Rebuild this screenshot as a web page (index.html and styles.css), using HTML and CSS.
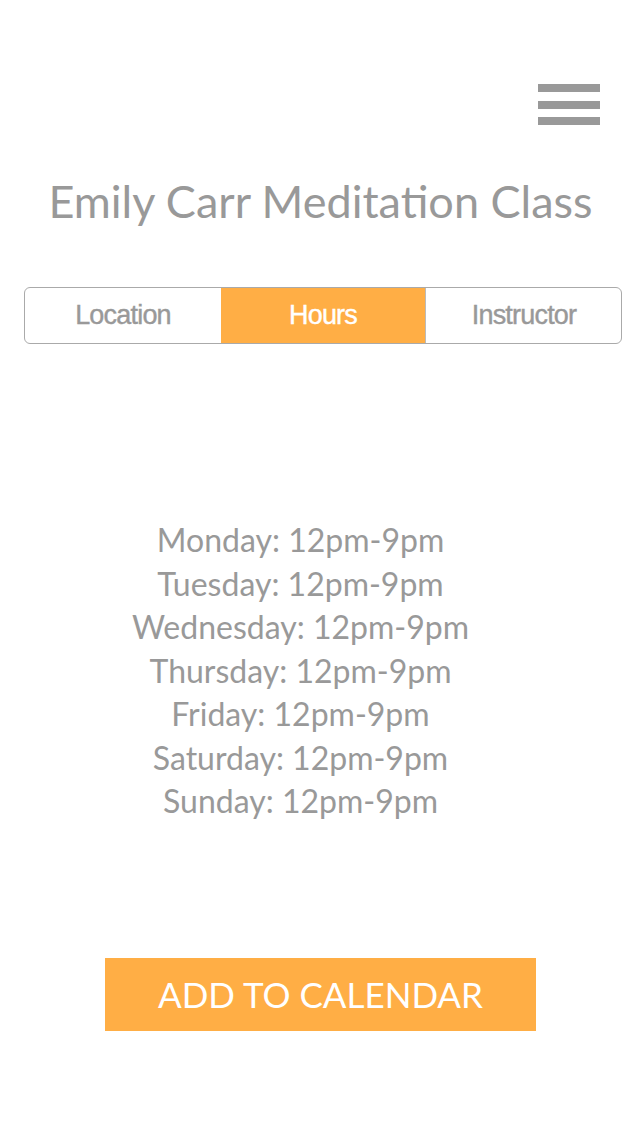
FILE: index.html
```html
<!DOCTYPE html>
<html>
<head>
<meta charset="utf-8">
<link rel="stylesheet" href="styles.css">
</head>
<body>
<div class="page">
  <header class="topbar">
    <button class="menu" aria-label="Menu">
      <span class="bar"></span><span class="bar"></span><span class="bar"></span>
    </button>
  </header>
  <h1 class="title">Emily Carr Meditation Class</h1>
  <nav class="tabs">
    <div class="tab">Location</div>
    <div class="tab active">Hours</div>
    <div class="tab">Instructor</div>
  </nav>
  <ul class="hours">
    <li>Monday: 12pm-9pm</li>
    <li>Tuesday: 12pm-9pm</li>
    <li>Wednesday: 12pm-9pm</li>
    <li>Thursday: 12pm-9pm</li>
    <li>Friday: 12pm-9pm</li>
    <li>Saturday: 12pm-9pm</li>
    <li>Sunday: 12pm-9pm</li>
  </ul>
  <div class="actions">
    <button class="cta">ADD TO CALENDAR</button>
  </div>
</div>
</body>
</html>
```

FILE: styles.css
```css
html, body {
  margin: 0;
  padding: 0;
  background: #fff;
}
.page {
  width: 641px;
  font-family: "Lato", "Open Sans", sans-serif;
  color: #999;
}
.topbar {
  display: flex;
  justify-content: flex-end;
  padding: 84px 41px 0 0;
}
.menu {
  display: flex;
  flex-direction: column;
  gap: 8.5px;
  padding: 0;
  border: 0;
  background: none;
}
.bar {
  display: block;
  width: 62px;
  height: 8px;
  background: #999;
}
.title {
  margin: 48px 0 0;
  text-align: center;
  font-weight: 400;
  font-size: 45px;
  line-height: 56px;
  color: #999;
}
.tabs {
  display: grid;
  grid-template-columns: 196px 204px 197px;
  margin: 58px 19px 0 24px;
  height: 57px;
  border: 1px solid #aaa;
  border-radius: 6px;
  overflow: hidden;
  box-sizing: border-box;
}
.tab {
  display: flex;
  align-items: center;
  justify-content: center;
  font-family: "Liberation Sans", Arial, sans-serif;
  font-size: 27px;
  letter-spacing: -0.8px;
  -webkit-text-stroke: 0.4px currentColor;
  color: #999;
}
.tab + .tab {
  border-left: 1px solid #bbb;
}
.tab.active {
  background: #ffae45;
  color: #fff;
  border-left: 0;
}
.tab.active + .tab {
  border-left: 1px solid #bbb;
}
.hours {
  list-style: none;
  margin: 174px 0 0;
  padding: 0 40px 0 0;
  text-align: center;
  font-size: 32px;
  line-height: 43.5px;
}
.actions {
  display: flex;
  justify-content: center;
  margin-top: 135px;
}
.cta {
  width: 431px;
  height: 73px;
  border: 0;
  background: #ffae45;
  color: #fff;
  font-family: "Lato", "Open Sans", sans-serif;
  font-size: 35px;
  padding: 0;
}
```
